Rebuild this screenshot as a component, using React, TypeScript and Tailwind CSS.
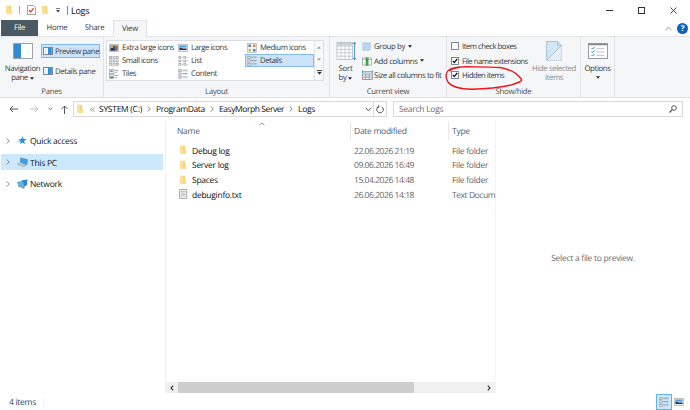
import type { ReactNode } from "react";

function Svg({ w, h, vb, className = "", children }: { w: number; h: number; vb?: string; className?: string; children: ReactNode }) {
  return (
    <svg width={w} height={h} viewBox={vb ?? `0 0 ${w} ${h}`} className={`block shrink-0 ${className}`} fill="none">
      {children}
    </svg>
  );
}

const Folder = () => (
  <Svg w={8} h={10}>
    <path d="M1.2 .8H6.2V8.6H1.2Z" fill="#f6d170" />
    <path d="M1.2 .8L4.4 1.6V9.6L1.2 8.8Z" fill="#fbe09a" />
    <path d="M4.8 5.5H7.2V8.8H4.8Z" fill="#fbdc88" />
  </Svg>
);

const Caret = ({ className = "" }: { className?: string }) => (
  <Svg w={4} h={3} className={className}><path d="M0 .3H4L2 2.7Z" fill="#222" /></Svg>
);

const PaneIcon = () => (
  <Svg w={10} h={8}>
    <rect x=".5" y=".5" width="9" height="7" fill="#fff" stroke="#7c8790" />
    <rect x="5" y="1" width="3.8" height="6" fill="#2b8fdc" />
    <path d="M1.7 2.5H3.7M1.7 4H3.7M1.7 5.5H3.7" stroke="#c0c7cc" strokeWidth=".6" />
  </Svg>
);

const ListIcon = ({ kind }: { kind: string }) => (
  <Svg w={10} h={10}>
    {kind === "xl" && <><rect x=".5" y="1.5" width="9" height="7" fill="#dfe3e6" stroke="#a5abb0" strokeWidth=".7" /><path d="M1.5 2.5H8.5V7.5H1.5Z" fill="#36608e" /><path d="M1.5 6L4 4L6 7.5H1.5Z" fill="#26364a" /><path d="M6 3H8.5V6H6Z" fill="#cf5b3c" /><path d="M2 3H4V5H2Z" fill="#dcb44e" /></>}
    {kind === "lg" && <><rect x=".5" y="1.5" width="9" height="7" fill="#e8edf1" stroke="#a5abb0" strokeWidth=".7" /><path d="M1.5 2.5H8.5V4.5H1.5Z" fill="#4a9be0" /><path d="M1.5 4.5L5 5.5H8.5V7H1.5Z" fill="#1d3347" /></>}
    {kind === "md" && <><rect x=".4" y=".4" width="9.2" height="9.2" fill="#f4f4f4" stroke="#aaa" strokeWidth=".6" /><path d="M1.5 1.5H4V4H1.5Z" fill="#627f9c" /><path d="M6 1.5H8.5V4H6Z" fill="#d5885e" /><path d="M1.5 6H4V8.5H1.5Z" fill="#d6b56d" /><path d="M6 6H8.5V8.5H6Z" fill="#4489be" /></>}
    {kind === "sm" && [1.6, 5, 8.4].map((y) => [1.6, 5, 8.4].map((x) => <rect key={`${x}-${y}`} x={x - 1.1} y={y - 1.1} width="2.2" height="2.2" fill={x === y ? "#c8d9e6" : "#f7e7e1"} stroke="#9ba1a7" strokeWidth=".6" />))}
    {kind === "list" && [1.6, 5, 8.4].map((y) => <g key={y}><rect x=".8" y={y - 1} width="2" height="2" fill="#f4ded5" stroke="#8b9299" strokeWidth=".5" /><rect x="5.8" y={y - 1} width="2" height="2" fill="#e0eaf0" stroke="#8b9299" strokeWidth=".5" /><path d={`M3.4 ${y}H4.8M8.4 ${y}H10`} stroke="#84909a" strokeWidth=".6" /></g>)}
    {(kind === "details" || kind === "content") && [1.6, 5, 8.4].map((y) => <g key={y}><rect x=".8" y={y - 1.1} width="2.4" height="2.2" fill="#f4e3dc" stroke="#8b9299" strokeWidth=".6" /><path d={`M4.4 ${y - 0.5}H9.7`} stroke={kind === "content" ? "#5693c4" : "#65727d"} strokeWidth=".7" strokeDasharray={kind === "details" ? "2.2 .6" : undefined} /><path d={`M4.4 ${y + 0.8}H9.7`} stroke="#c1c9cf" strokeWidth=".5" /></g>)}
    {kind === "tiles" && <><rect x=".5" y=".5" width="4.5" height="3.8" fill="#e6eef4" stroke="#8b9299" strokeWidth=".6" /><rect x=".5" y="5.6" width="4.5" height="3.8" fill="#e6eef4" stroke="#8b9299" strokeWidth=".6" /><path d="M1.2 7.5H4.3V9H1.2Z" fill="#3b8b50" /><path d="M1.5 1.5H3.5V3H1.5Z" fill="#4a90cc" /><path d="M6.3 1.5H9M6.3 3.3H8M6.3 6.5H9M6.3 8.3H8" stroke="#65727d" strokeWidth=".7" /></>}
  </Svg>
);

function LayoutItem({ kind, label, on }: { kind: string; label: string; on?: boolean }) {
  return (
    <div className={`flex h-[13px] items-center gap-[3px] border pl-px ${on ? "border-[#84b9e8] bg-[#cde3fa]" : "border-transparent"}`}>
      <ListIcon kind={kind} />
      <span>{label}</span>
    </div>
  );
}

function Check({ label, on }: { label: string; on?: boolean }) {
  return (
    <div className="flex h-[14.5px] items-center gap-[3.5px]">
      <Svg w={8} h={8}>
        <rect x=".5" y=".5" width="7" height="7" fill="#fff" stroke="#6f7e8b" strokeWidth=".9" />
        {on && <path d="M1.8 3.9L3.3 5.6L6.2 2" stroke="#111" strokeWidth="1.3" />}
      </Svg>
      <span className="pt-[2px]">{label}</span>
    </div>
  );
}

function Chevron() {
  return <Svg w={4} h={6}><path d="M.8 .5L3.2 3L.8 5.5" stroke="#777" strokeWidth=".9" /></Svg>;
}

function Crumb({ label, w }: { label: string; w: string }) {
  return (
    <div className={`flex shrink-0 items-center justify-between ${w}`}>
      <span>{label}</span>
      <Chevron />
    </div>
  );
}

function NavItem({ label, on, children }: { label: string; on?: boolean; children: ReactNode }) {
  return (
    <div className={`ml-px flex h-4 w-[162px] items-center pl-[5px] ${on ? "bg-[#cce8ff]" : ""}`}>
      <Chevron />
      <div className="ml-[7px] flex w-[13px] shrink-0 items-center">{children}</div>
      <span className="pt-[2px]">{label}</span>
    </div>
  );
}

const files = [
  { name: "Debug log", date: "22.06.2026 21:19", type: "File folder" },
  { name: "Server log", date: "09.06.2026 16:49", type: "File folder" },
  { name: "Spaces", date: "15.04.2026 14:48", type: "File folder" },
  { name: "debuginfo.txt", date: "26.06.2026 14:18", type: "Text Docum", text: true },
];

const groupTitle = "mt-auto h-[11px] pt-px text-center tracking-[-0.3px] text-[#505050]";

export default function App() {
  return (
    <div className="relative flex h-[410px] w-[690px] flex-col overflow-hidden whitespace-nowrap bg-white font-['Open_Sans','Noto_Sans',sans-serif] text-[8.5px] leading-[11px] tracking-[-0.28px] text-[#111] [text-rendering:geometricPrecision]">
      <header className="flex h-5 shrink-0 items-center pl-[5px]">
        <Folder />
        <i className="ml-[6px] mr-[7px] h-[8px] w-px bg-[#aaa]" />
        <Svg w={9} h={10}>
          <path d="M.5 .5H6.3L8.5 2.5V9.5H.5Z" fill="#fff" stroke="#8c8c8c" strokeWidth=".8" />
          <path d="M2 5L3.7 7L6.8 3.2" stroke="#e23b2e" strokeWidth="1.2" />
        </Svg>
        <div className="ml-[5px]"><Folder /></div>
        <Svg w={4} h={5} className="ml-[7px]"><path d="M0 .5H4" stroke="#555" strokeWidth=".8" /><path d="M0 2H4L2 4.4Z" fill="#444" /></Svg>
        <i className="ml-[7px] mr-[3px] h-[9px] w-px bg-[#888]" />
        <span className="pt-px text-[9px] leading-5">Logs</span>
        <div className="ml-auto mr-[13px] flex items-center gap-[25px]">
          <Svg w={7} h={7}><path d="M0 3.5H7" stroke="#333" /></Svg>
          <Svg w={7} h={7}><rect x=".5" y=".5" width="6" height="6" stroke="#333" /></Svg>
          <Svg w={7} h={7}><path d="M.5 .5L6.5 6.5M6.5 .5L.5 6.5" stroke="#333" strokeWidth=".9" /></Svg>
        </div>
      </header>

      <nav className="flex h-4 shrink-0 text-center text-[7.8px] leading-[17.5px] tracking-[-0.28px] text-[#3a3a3a]">
        <span className="ml-px h-4 w-[37px] bg-[#4b5a62] text-white">File</span>
        <span className="w-[38px]">Home</span>
        <span className="w-[37px]">Share</span>
        <span className="z-10 -mb-px h-[17px] w-[34px] border border-b-0 border-[#dfe3e8] bg-[#f4f6f8] leading-[16px]">View</span>
        <div className="ml-auto mr-[2px] flex items-center gap-[5px]">
          <Svg w={7} h={5}><path d="M.5 4.2L3.5 1L6.5 4.2" stroke="#888" strokeWidth=".8" /></Svg>
          <span className="h-[11px] w-[11px] rounded-full bg-[#0b63bd] text-[8px] font-bold leading-[11px] text-white">?</span>
        </div>
      </nav>

      <section className="flex h-[62px] shrink-0 border-y border-[#dfe2e6] bg-[#f4f6f8] text-[7.8px] leading-[10px] tracking-[-0.45px] text-[#383838]">
        <div className="flex w-[104px] flex-col border-r border-[#e1e4e7]">
          <div className="flex h-[46px] pt-[6px]">
            <div className="flex w-[41px] flex-col items-center pl-1">
              <Svg w={20} h={16}>
                <rect x=".5" y=".5" width="19" height="15" fill="#fff" stroke="#9aa2a8" />
                <rect x="1" y="1" width="7" height="14" fill="#2f8cd3" />
              </Svg>
              <span className="mt-[5px] h-[9px] tracking-[-0.33px]">Navigation</span>
              <span className="flex items-center gap-[2px]">pane <Caret /></span>
            </div>
            <div className="flex flex-col gap-[6px] pt-px tracking-[-0.39px]">
              <div className="flex h-[14px] w-[59px] items-center gap-[2px] border border-[#84b9e8] bg-[#cde3fa] pl-[1px]"><PaneIcon /><span className="pt-[2px]">Preview pane</span></div>
              <div className="flex h-[14px] items-center gap-[2px] pl-[2px]"><PaneIcon /><span className="pt-[2px]">Details pane</span></div>
            </div>
          </div>
          <div className={groupTitle}>Panes</div>
        </div>

        <div className="flex w-[226px] flex-col border-r border-[#e1e4e7]">
          <div className="ml-[2px] mt-[3px] flex h-[41px] w-[218px] border border-[#dcdfe2] bg-white">
            <div className="grid w-[207px] grid-cols-[69px_69px_69px] content-start">
              <LayoutItem kind="xl" label="Extra large icons" />
              <LayoutItem kind="lg" label="Large icons" />
              <LayoutItem kind="md" label="Medium icons" />
              <LayoutItem kind="sm" label="Small icons" />
              <LayoutItem kind="list" label="List" />
              <LayoutItem kind="details" label="Details" on />
              <LayoutItem kind="tiles" label="Tiles" />
              <LayoutItem kind="content" label="Content" />
            </div>
            <div className="flex grow flex-col items-center justify-around border-l border-[#e1e4e7] bg-[#f8f9fa]">
              <Svg w={4} h={3}><path d="M0 2.7L2 .3L4 2.7Z" fill="#9ba3aa" /></Svg>
              <Svg w={4} h={3}><path d="M0 .3L2 2.7L4 .3Z" fill="#9ba3aa" /></Svg>
              <Svg w={5} h={5}><path d="M0 .6H5" stroke="#333" /><path d="M.2 2H4.8L2.5 4.8Z" fill="#333" /></Svg>
            </div>
          </div>
          <div className={groupTitle}>Layout</div>
        </div>

        <div className="flex w-[117px] flex-col border-r border-[#e1e4e7]">
          <div className="flex h-[46px]">
            <div className="flex w-[31px] flex-col items-center pt-[4px]">
              <Svg w={20} h={20}>
                <rect x="1" y="1.5" width="15.5" height="17" fill="#fff" stroke="#a9b1b8" strokeWidth=".7" />
                <path d="M1 2H16.5V4.5H1Z" fill="#c6d4df" />
                <path d="M1 5H16.5M1 8.4H16.5M1 11.8H16.5M1 15.2H16.5M5 1.5V18.5M9 1.5V18.5M13 1.5V18.5" stroke="#b6bec5" strokeWidth=".7" />
                <path d="M18.5 1V19M17 3L18.5 1L20 3M17 17L18.5 19L20 17" stroke="#3a8dd0" strokeWidth=".9" />
              </Svg>
              <span className="mt-[3px] h-[9px] tracking-[-0.2px]">Sort</span>
              <span className="flex items-center gap-[2px]">by <Caret /></span>
            </div>
            <div className="flex flex-col pl-[1px] pt-[2px] tracking-[-0.34px]">
              <div className="flex h-[14.5px] items-center gap-[3px]">
                <Svg w={9} h={9}><rect x=".8" y=".8" width="7.4" height="7.4" fill="#b5dbf6" stroke="#7eaed0" strokeWidth=".6" strokeDasharray="1.2 .7" /></Svg><span className="pt-[2px]">Group by</span><Caret />
              </div>
              <div className="flex h-[14.5px] items-center gap-[2px]">
                <Svg w={10} h={10}><rect x=".5" y="2" width="9" height="7" fill="#fff" stroke="#8c969e" strokeWidth=".7" /><path d="M.5 3.6H9.5" stroke="#8c969e" strokeWidth=".6" /><path d="M3.6 1.5H6.5V9.6H3.6Z" fill="#37a947" /></Svg><span className="pt-[2px]">Add columns</span><Caret />
              </div>
              <div className="flex h-[14.5px] items-center gap-px tracking-[-0.39px]">
                <Svg w={11} h={10}><path d="M.5 1.8H10.5M.5 .5V3.2M10.5 .5V3.2" stroke="#3180bd" strokeWidth=".8" /><rect x=".5" y="4" width="10" height="5.5" fill="#fff" stroke="#727e87" strokeWidth=".7" /><path d="M.5 6H10.5M.5 7.8H10.5M3.8 4V9.5M7.2 4V9.5" stroke="#727e87" strokeWidth=".6" /></Svg><span className="pt-[2px]">Size all columns to fit</span>
              </div>
            </div>
          </div>
          <div className={groupTitle}>Current view</div>
        </div>

        <div className="flex w-[134px] flex-col border-r border-[#e1e4e7]">
          <div className="flex h-[46px]">
            <div className="flex w-[81px] flex-col pl-[3.5px] pt-[2px] tracking-[-0.53px]">
              <Check label="Item check boxes" />
              <Check label="File name extensions" on />
              <Check label="Hidden items" on />
            </div>
            <div className="flex w-[52px] flex-col items-center pt-[4px] tracking-[-0.39px] text-[#8b8b8b]">
              <Svg w={16} h={20}>
                <path d="M.6 .6H11.5L15.4 4.5V19.4H.6Z" fill="#e4eff8" stroke="#a4b9cb" strokeWidth=".8" strokeDasharray="1.3 .8" />
                <path d="M.6 .6H11.5L15.4 4.5L.6 19.4Z" fill="#d3e6f5" stroke="#9bb7cf" strokeWidth=".7" />
                <path d="M11.5 .6V4.5H15.4" stroke="#9bb7cf" strokeWidth=".7" />
              </Svg>
              <span className="mt-[3px] h-[9px]">Hide selected</span>
              <span>items</span>
            </div>
          </div>
          <div className={groupTitle}>Show/hide</div>
        </div>

        <div className="flex w-[34px] flex-col items-center border-r border-[#e1e4e7] pt-[6px]">
          <Svg w={20} h={16}>
            <rect x=".5" y=".5" width="19" height="15" fill="#fff" stroke="#7d868e" strokeWidth=".8" />
            <path d="M.5 1.4H19.5" stroke="#858e95" strokeWidth="1.8" />
            <path d="M3.5 5L4.5 6L6.5 4M3.5 8.5L4.5 9.5L6.5 7.5M3.5 12L4.5 13L6.5 11" stroke="#2c86c9" />
            <path d="M8.5 5.5H16.5M8.5 9H16.5M8.5 12.5H16.5" stroke="#b5bdc4" strokeWidth=".8" />
          </Svg>
          <span className="mt-[5px] tracking-[-0.38px]">Options</span>
          <Caret className="mt-[2px]" />
        </div>
      </section>

      <div className="flex h-[22px] shrink-0 items-center">
        <div className="flex w-[73px] shrink-0 items-center">
          <Svg w={9} h={8} className="ml-[9px]"><path d="M9 4H1M4 1L1 4L4 7" stroke="#444" strokeWidth=".9" /></Svg>
          <Svg w={9} h={8} className="ml-[12px]"><path d="M0 4H8M5 1L8 4L5 7" stroke="#bbb" strokeWidth=".9" /></Svg>
          <Svg w={5} h={4} className="ml-[9px]"><path d="M.5 .7L2.5 2.8L4.5 .7" stroke="#666" strokeWidth=".9" /></Svg>
          <Svg w={7} h={9} className="ml-[8px]"><path d="M3.5 9V1M.5 4L3.5 1L6.5 4" stroke="#444" strokeWidth=".9" /></Svg>
        </div>
        <div className="flex h-4 w-[314px] items-center border border-[#d9d9d9] pl-[2px]">
          <Folder />
          <Svg w={5} h={5} className="ml-[6px] mr-[4px]"><path d="M2.2 .5L.5 2.5L2.2 4.5M4.6 .5L2.9 2.5L4.6 4.5" stroke="#666" strokeWidth=".7" /></Svg>
          <Crumb label="SYSTEM (C:)" w="w-[52px] mr-[5px]" />
          <Crumb label="ProgramData" w="w-[58px] mr-[5px] tracking-[-0.38px]" />
          <Crumb label="EasyMorph Server" w="w-[74px] mr-[5px] tracking-[-0.43px]" />
          <span>Logs</span>
          <Svg w={7} h={5} className="ml-auto"><path d="M.8 .8L3.5 3.8L6.2 .8" stroke="#555" /></Svg>
          <div className="ml-[1px] flex h-full w-[13px] items-center justify-center border-l border-[#d9d9d9]">
            <Svg w={8} h={9}><path d="M5.8 1.7A3.3 3.3 0 1 1 2.5 1.6M2.8 .2V2.3H.8" stroke="#555" /></Svg>
          </div>
        </div>
        <div className="ml-[6px] flex h-4 w-[290px] items-center border border-[#d9d9d9] px-[5px] text-[#6d6d6d]">
          Search Logs
          <Svg w={8} h={8} className="ml-auto"><circle cx="5" cy="3" r="2.3" stroke="#444" strokeWidth=".9" /><path d="M3.3 4.7L.5 7.5" stroke="#444" strokeWidth="1.1" /></Svg>
        </div>
      </div>

      <main className="flex h-[273px] shrink-0">
        <aside className="flex w-[166px] shrink-0 flex-col gap-[5.5px] border-r border-[#f0f0f0] pt-[12.5px]">
          <NavItem label="Quick access">
            <Svg w={10} h={9}><path d="M5.5 .3L6.6 3L9.6 3.2L7.2 5L8 8L5.5 6.4L2.8 8.1L3.7 5.2L1.2 3.4L4.4 3Z" fill="#278ddd" /><path d="M.2 7L3.5 4" stroke="#64aadf" strokeWidth=".8" /></Svg>
          </NavItem>
          <NavItem label="This PC" on>
            <Svg w={12} h={10}><path d="M3.5 .7L10.7 2.6L10 8L3.2 5.3Z" fill="#3c9fe3" stroke="#688ba8" strokeWidth=".5" /><path d="M1.2 5.8L9 8.4L7 9.7L.2 7.6Z" fill="#c6ced4" stroke="#7f8a93" strokeWidth=".4" /></Svg>
          </NavItem>
          <NavItem label="Network">
            <Svg w={12} h={10}><path d="M4.5 1.5L10.5 .5L10 6.5L5.5 7.5Z" fill="#2a8bd3" /><path d="M.5 3.2L6.2 2.3L7.5 7.5L2 8Z" fill="#62b5ec" stroke="#477da6" strokeWidth=".5" /><path d="M3.5 8.8L8 8L7 9.7Z" fill="#61788c" /></Svg>
          </NavItem>
        </aside>
        <section className="flex w-[330px] shrink-0 flex-col border-r border-[#f4f4f4]">
          <div className="flex h-[22px] shrink-0 items-stretch leading-[20px] text-[#4c607a]">
            <div className="my-[2px] flex w-[185px] border-r border-[#e5e5e5] pl-[11px]">
              <span className="w-[22px]">Name</span>
              <Svg w={6} h={4} className="ml-[60px]"><path d="M.5 3.2L3 .8L5.5 3.2" stroke="#777" strokeWidth=".8" /></Svg>
            </div>
            <div className="my-[2px] w-[98px] border-r border-[#e5e5e5] pl-[3px]">Date modified</div>
            <div className="my-[2px] pl-[3px]">Type</div>
          </div>
          <div className="pt-[1px]">
            {files.map((f) => (
              <div key={f.name} className="flex h-[14.67px] items-center">
                <div className="flex w-[188px] shrink-0 items-center pl-[13px]">
                  <div className="w-[13px] shrink-0">
                    {f.text ? <Svg w={9} h={10}><path d="M.6 .6H7.8V9.4H.6Z" fill="#f3f3f3" stroke="#8a8a8a" strokeWidth=".7" /><path d="M2 2.5H6.5M2 4H6.5M2 5.5H6.5M2 7H6.5" stroke="#a1a1a1" strokeWidth=".6" /></Svg> : <Folder />}
                  </div>
                  <span className="pt-[2px]">{f.name}</span>
                </div>
                <span className="w-[98px] shrink-0 pt-[2px] tracking-[-0.45px] text-[#666]">{f.date}</span>
                <span className={`shrink-0 pt-[2px] text-[#666] ${f.text ? "tracking-[-0.45px]" : ""}`}>{f.type}</span>
              </div>
            ))}
          </div>
          <div className="mt-auto flex h-[11px] items-stretch bg-[#f0f0f0]">
            <div className="flex w-3 items-center justify-center"><Svg w={4} h={6}><path d="M3.2 .7L1 3L3.2 5.3" stroke="#333" strokeWidth="1.1" /></Svg></div>
            <div className="w-[236px] bg-[#cdcdcd]" />
            <div className="ml-auto flex w-[13px] items-center justify-center"><Svg w={4} h={6}><path d="M.8 .7L3 3L.8 5.3" stroke="#333" strokeWidth="1.1" /></Svg></div>
          </div>
        </section>
        <div className="flex grow items-center justify-center pt-[3px] text-[#6d6d6d]">Select a file to preview.</div>
      </main>

      <footer className="flex h-[17px] shrink-0 items-center pl-[9px] text-[#29446b]">
        <span className="pt-[2px]">4 items</span>
        <i className="ml-[7px] h-[8px] w-px bg-[#eeeeee]" />
        <div className="ml-auto mr-[6px] flex items-center gap-[2px]">
          <div className="flex h-4 w-4 items-center justify-center border border-[#64b2e8] bg-[#cbe8fb]"><ListIcon kind="details" /></div>
          <ListIcon kind="lg" />
        </div>
      </footer>

      <svg className="pointer-events-none absolute left-0 top-0" width="690" height="410" fill="none">
        <path d="M449.5 71C453 67.5 458 67 466 66.8C480 67 490 67 500 67.5C511 69.5 518 74 521.5 79.5C522.5 81.5 517 83 510 85.3C498 88 485 89 472 89.3C460 89 451 86 448 82C445 77 445.5 72 449.5 69.5C452 68.2 456 67.4 460 67" stroke="#f0141c" strokeWidth="1.4" />
      </svg>
    </div>
  );
}
